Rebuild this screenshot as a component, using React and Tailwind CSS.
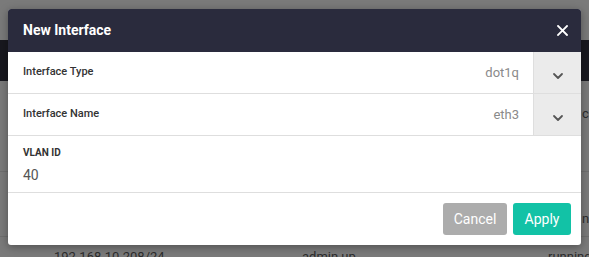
import React from "react";

function Chevron() {
  return (
    <svg width="12" height="8" viewBox="0 0 12 8" fill="none">
      <path d="M2 2l4 4 4-4" stroke="#555" strokeWidth="1.8" strokeLinecap="round" strokeLinejoin="round" />
    </svg>
  );
}

function SelectRow({ label, value }) {
  return (
    <div className="flex h-[42px] border-b border-[#dedede]">
      <div className="flex flex-1 items-center justify-between pl-[15px] pr-[14px]">
        <span className="text-[11px] font-medium text-[#333]">{label}</span>
        <span className="text-[13px] text-[#8a8a8a]">{value}</span>
      </div>
      <div className="flex w-[48px] items-end justify-center border-l border-[#dedede] bg-[#ebebeb] pb-[13px]">
        <Chevron />
      </div>
    </div>
  );
}

export default function App() {
  return (
    <div className="relative h-[257px] w-[589px] overflow-hidden bg-[#7a7a7a]" style={{ fontFamily: "Roboto, 'Liberation Sans', sans-serif" }}>
      {/* background page */}
      <div className="flex flex-col text-[13px] text-[#2c2c2c]">
        <div className="h-[40px]" />
        <div className="h-[41px] bg-[#18181f]" />
        <div className="flex h-[91px] items-start border-b border-[#6e6e6e] pl-[582px] pt-[23px]">
          <span>c</span>
        </div>
        <div className="flex h-[65px] items-start border-b border-[#6e6e6e] pl-[582px] pt-[37px]">
          <span>ng</span>
        </div>
        <div className="flex h-[20px] items-start pt-[10px]">
          <span className="ml-[54px] w-[248px] shrink-0">192.168.10.208/24</span>
          <span className="w-[246px] shrink-0">admin up</span>
          <span className="shrink-0">running</span>
        </div>
      </div>

      {/* modal */}
      <div className="absolute left-[8px] top-[9px] w-[573px] overflow-hidden rounded-[3px] bg-white shadow-[0_2px_8px_rgba(0,0,0,0.35)]">
        <div className="flex h-[43px] items-center justify-between bg-[#2a2b3d] pl-[15px] pr-[13px]">
          <span className="text-[14px] font-bold text-white">New Interface</span>
          <svg width="11" height="11" viewBox="0 0 11 11">
            <path d="M1 1l9 9M10 1l-9 9" stroke="white" strokeWidth="1.8" strokeLinecap="square" />
          </svg>
        </div>
        <SelectRow label="Interface Type" value="dot1q" />
        <SelectRow label="Interface Name" value="eth3" />
        <div className="flex h-[57px] flex-col border-b border-[#dedede] pl-[15px] pt-[9px]">
          <span className="text-[10px] font-bold text-[#333]">VLAN ID</span>
          <span className="mt-[5px] text-[14px] text-[#555]">40</span>
        </div>
        <div className="flex h-[52px] items-center justify-end gap-[6px] pr-[10px]">
          <button className="h-[32px] w-[64px] rounded-[3px] bg-[#acacac] text-[14px] text-white">Cancel</button>
          <button className="h-[32px] w-[58px] rounded-[3px] bg-[#12c2a6] text-[14px] text-white">Apply</button>
        </div>
      </div>
    </div>
  );
}
